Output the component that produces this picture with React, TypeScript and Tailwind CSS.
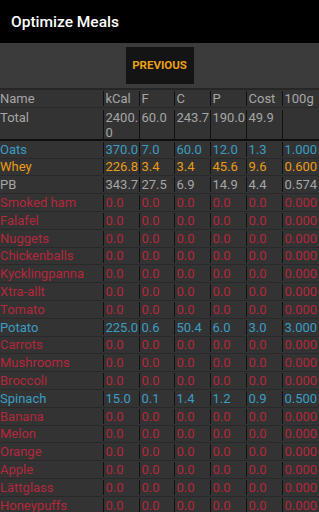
import React from "react";

type Row = { name: string; v: string[]; color: string };

const RED = "text-[#b3283b]";
const BLUE = "text-[#3b9dc2]";
const ORANGE = "text-[#eb9c14]";
const GRAY = "text-[#a6a6a6]";

const zero = ["0.0", "0.0", "0.0", "0.0", "0.0", "0.000"];

const rows: Row[] = [
  { name: "Oats", v: ["370.0", "7.0", "60.0", "12.0", "1.3", "1.000"], color: BLUE },
  { name: "Whey", v: ["226.8", "3.4", "3.4", "45.6", "9.6", "0.600"], color: ORANGE },
  { name: "PB", v: ["343.7", "27.5", "6.9", "14.9", "4.4", "0.574"], color: GRAY },
  { name: "Smoked ham", v: zero, color: RED },
  { name: "Falafel", v: zero, color: RED },
  { name: "Nuggets", v: zero, color: RED },
  { name: "Chickenballs", v: zero, color: RED },
  { name: "Kycklingpanna", v: zero, color: RED },
  { name: "Xtra-allt", v: zero, color: RED },
  { name: "Tomato", v: zero, color: RED },
  { name: "Potato", v: ["225.0", "0.6", "50.4", "6.0", "3.0", "3.000"], color: BLUE },
  { name: "Carrots", v: zero, color: RED },
  { name: "Mushrooms", v: zero, color: RED },
  { name: "Broccoli", v: zero, color: RED },
  { name: "Spinach", v: ["15.0", "0.1", "1.4", "1.2", "0.9", "0.500"], color: BLUE },
  { name: "Banana", v: zero, color: RED },
  { name: "Melon", v: zero, color: RED },
  { name: "Orange", v: zero, color: RED },
  { name: "Apple", v: zero, color: RED },
  { name: "Lättglass", v: zero, color: RED },
  { name: "Honeypuffs", v: zero, color: RED },
];

const grid = "grid grid-cols-[103px_36px_35px_36px_36px_36px_37px]";

function Cells({ name, v, color }: Row) {
  return (
    <>
      <div className={`whitespace-nowrap overflow-hidden ${color}`}>{name}</div>
      {v.map((x, i) => (
        <div key={i} className={`border-l-[1.5px] border-[#111111] pl-[1.5px] break-all ${color}`}>
          {x}
        </div>
      ))}
    </>
  );
}

export default function App() {
  return (
    <div
      className="w-[319px] h-[512px] overflow-hidden bg-[#333333] text-[13px] leading-[15px]"
      style={{ fontFamily: "Roboto, 'Noto Sans', sans-serif" }}
    >
      <div className="h-[43px] bg-black flex items-center pl-[11px] pt-[2px]">
        <span className="text-white text-[15.5px] font-medium">Optimize Meals</span>
      </div>
      <div className="h-[47px] bg-[#3b3b3b] flex justify-center pt-[4px] border-b-[2px] border-[#262626]">
        <div className="w-[68px] h-[37px] bg-[#141414] flex items-center justify-center">
          <span className="text-[#eba016] text-[11.5px] font-bold">PREVIOUS</span>
        </div>
      </div>
      <div className={`${grid} h-[17.8px] border-b border-[#292929] items-center`}>
        <Cells name="Name" v={["kCal", "F", "C", "P", "Cost", "100g"]} color={GRAY} />
      </div>
      <div className={`${grid} h-[33px] border-b-[2px] border-[#0e0e0e] pt-[2px]`}>
        <Cells name="Total" v={["2400.0", "60.0", "243.7", "190.0", "49.9", ""]} color={GRAY} />
      </div>
      {rows.map((r) => (
        <div key={r.name} className={`${grid} h-[17.8px] border-b border-[#292929] items-center`}>
          <Cells {...r} />
        </div>
      ))}
    </div>
  );
}
